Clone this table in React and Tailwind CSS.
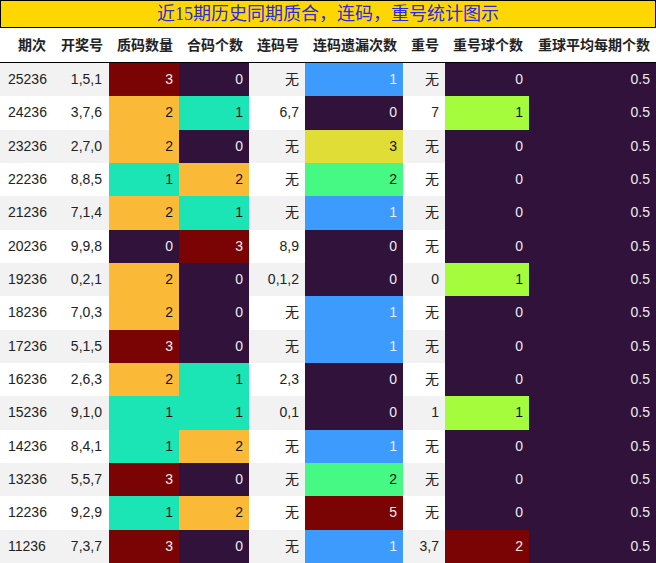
import React from 'react'

const C = {
  purple: 'bg-[#30123b] text-[#ececec]',
  red: 'bg-[#7a0403] text-[#ececec]',
  orange: 'bg-[#fbb938] text-[#111]',
  teal: 'bg-[#1be5b5] text-[#111]',
  blue: 'bg-[#3e9bfe] text-[#ececec]',
  yellow: 'bg-[#e1dd37] text-[#111]',
  green: 'bg-[#46f884] text-[#111]',
  lime: 'bg-[#a4fc3c] text-[#111]',
}

const zhiColor = { 0: C.purple, 1: C.teal, 2: C.orange, 3: C.red }
const yiColor = { 0: C.purple, 1: C.blue, 2: C.green, 3: C.yellow, 5: C.red }
const chongColor = { 0: C.purple, 1: C.lime, 2: C.red }

const rows = [
  ['25236', '1,5,1', 3, 0, '无', 1, '无', 0],
  ['24236', '3,7,6', 2, 1, '6,7', 0, '7', 1],
  ['23236', '2,7,0', 2, 0, '无', 3, '无', 0],
  ['22236', '8,8,5', 1, 2, '无', 2, '无', 0],
  ['21236', '7,1,4', 2, 1, '无', 1, '无', 0],
  ['20236', '9,9,8', 0, 3, '8,9', 0, '无', 0],
  ['19236', '0,2,1', 2, 0, '0,1,2', 0, '0', 1],
  ['18236', '7,0,3', 2, 0, '无', 1, '无', 0],
  ['17236', '5,1,5', 3, 0, '无', 1, '无', 0],
  ['16236', '2,6,3', 2, 1, '2,3', 0, '无', 0],
  ['15236', '9,1,0', 1, 1, '0,1', 0, '1', 1],
  ['14236', '8,4,1', 1, 2, '无', 1, '无', 0],
  ['13236', '5,5,7', 3, 0, '无', 2, '无', 0],
  ['12236', '9,2,9', 1, 2, '无', 5, '无', 0],
  ['11236', '7,3,7', 3, 0, '无', 1, '3,7', 2],
]

const headers = ['期次', '开奖号', '质码数量', '合码个数', '连码号', '连码遗漏次数', '重号', '重号球个数', '重球平均每期个数']

const cols = 'grid grid-cols-[52px_57px_70px_70px_56px_98px_42px_84px_127px]'

export default function App() {
  return (
    <div className="w-[656px] h-[563px] bg-white overflow-hidden text-[14px] text-[#222]" style={{ fontFamily: '"Liberation Sans", "Noto Sans CJK SC", sans-serif' }}>
      <div className="h-[28px] bg-[#ffd700] border border-black flex items-center justify-center text-[18px] text-[#2a2ae6]" style={{ fontFamily: '"Liberation Serif", "Noto Sans CJK SC", serif' }}>
        近15期历史同期质合，连码，重号统计图示
      </div>
      <div className={`${cols} h-[35px] border-b border-black font-bold`}>
        {headers.map((h) => (
          <div key={h} className="flex items-center justify-end pr-[6px] whitespace-nowrap">{h}</div>
        ))}
      </div>
      <div className="grid grid-rows-[repeat(15,1fr)] h-[500px]">
        {rows.map((r, i) => {
          const bg = i % 2 === 0 ? 'bg-[#f2f2f2]' : 'bg-white'
          return (
            <div key={r[0]} className={`${cols} ${bg}`}>
              <div className="flex items-center pl-[8px]">{r[0]}</div>
              <div className="flex items-center justify-end pr-[7px]">{r[1]}</div>
              <div className={`flex items-center justify-end pr-[6px] ${zhiColor[r[2]]}`}>{r[2]}</div>
              <div className={`flex items-center justify-end pr-[6px] ${zhiColor[r[3]]}`}>{r[3]}</div>
              <div className="flex items-center justify-end pr-[6px]">{r[4]}</div>
              <div className={`flex items-center justify-end pr-[6px] ${yiColor[r[5]]}`}>{r[5]}</div>
              <div className="flex items-center justify-end pr-[6px]">{r[6]}</div>
              <div className={`flex items-center justify-end pr-[6px] ${chongColor[r[7]]}`}>{r[7]}</div>
              <div className={`flex items-center justify-end pr-[6px] ${C.purple}`}>0.5</div>
            </div>
          )
        })}
      </div>
    </div>
  )
}
